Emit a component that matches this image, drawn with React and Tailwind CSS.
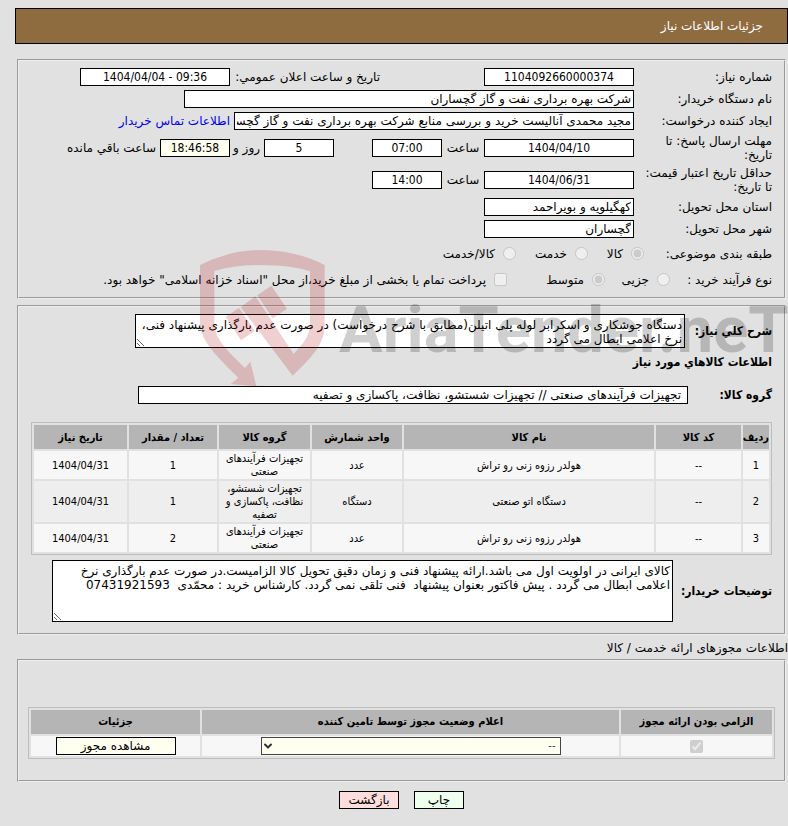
import React from 'react';
import { ChevronDown } from 'lucide-react';

const items = [
  { row: 1, code: '--', name: 'هولدر رزوه زنی رو تراش', unit: 'عدد', group: 'تجهیزات فرآیندهای صنعتی', count: 1, date: '1404/04/31' },
  { row: 2, code: '--', name: 'دستگاه اتو صنعتی', unit: 'دستگاه', group: 'تجهیزات شستشو، نظافت، پاکسازی و تصفیه', count: 1, date: '1404/04/31' },
  { row: 3, code: '--', name: 'هولدر رزوه زنی رو تراش', unit: 'عدد', group: 'تجهیزات فرآیندهای صنعتی', count: 2, date: '1404/04/31' },
];

const box = 'h-[18px] shrink-0 border border-black px-[2px] text-[12px] leading-4';
const condensed = "font-['DejaVu_Sans_Condensed','DejaVu_Sans',sans-serif]";
const panel = 'mr-[2px] ml-[2px] border-2 border-[#eeeeee] [border-style:groove]';
const th = 'h-[24px] bg-[#b5b5b5] p-0 text-[11px] font-bold whitespace-nowrap';

function Field({ id, value, className }) {
  return <input id={id} readOnly defaultValue={value} className={`${box} bg-white ${className}`} />;
}

// dates, times and counters
function NumberField({ id, value, className }) {
  return <input id={id} dir="ltr" readOnly defaultValue={value} className={`${box} ${condensed} text-center ${className}`} />;
}

function Row({ label, id, children, className = 'h-[22px]' }) {
  return (
    <div className={`flex items-center ${className}`}>
      <label htmlFor={id} className="w-[138px] shrink-0 pl-1 leading-[14px]">{label}</label>
      {children}
    </div>
  );
}

function Option({ type = 'radio', name, label, checked, className }) {
  return (
    <label className={`flex items-center gap-2 whitespace-nowrap ${className}`}>
      <input type={type} name={name} defaultChecked={checked} disabled className="m-0 size-[13px] shrink-0" />
      <span>{label}</span>
    </label>
  );
}

function Watermark() {
  return (
    <div aria-hidden="true" className="pointer-events-none absolute top-[245px] right-0 h-[145px] w-[593px]">
      <svg viewBox="0 0 1779 435" className="h-full w-full">
        <g fill="#b40f19" fillOpacity="0.2">
          <path d="M15 60Q105 15 200 15Q300 15 389 60V240C389 300 345 342 293 392L137 186L181 154L296 327C325 295 345 275 345 235V78Q285 60 200 60Q120 60 58 78V235C58 282 100 320 150 369L166 350L184 424L107 417L130 398C65 335 15 285 15 235Z" />
          <path d="M187 151L229 122L276 191L233 220Z" />
          <path d="M92 215L132 189L179 258L138 286Z" />
        </g>
        <text x="432" y="320" fontSize="195" fontFamily="Roboto, sans-serif" fontWeight="bold" fill="#000000" fillOpacity="0.19" direction="ltr">
          AriaTender.neT
        </text>
      </svg>
    </div>
  );
}

export default function App() {
  return (
    <div
      dir="rtl"
      className="relative min-h-screen overflow-hidden bg-[#e1e1e1] pt-2 pb-[18px] pl-[15px] font-['DejaVu_Sans',sans-serif] text-[12px] leading-[14px] text-black"
    >
      <header className="flex h-9 items-center border border-black bg-[#8f6c40] px-6 text-white">
        <h1>جزئیات اطلاعات نیاز</h1>
      </header>

      <section className={`${panel} mt-[15px] pt-[5px] pr-3 pb-[5px]`}>
        <Row label="شماره نیاز:" id="number">
          <NumberField id="number" value="1104092660000374" className="w-[150px] bg-white" />
          <label htmlFor="announce" className="mr-[104px] w-[150px] shrink-0 whitespace-nowrap">تاریخ و ساعت اعلان عمومي:</label>
          <NumberField id="announce" value="1404/04/04 - 09:36" className="w-[150px] bg-white" />
        </Row>
        <Row label="نام دستگاه خریدار:" id="buyer">
          <Field id="buyer" value="شرکت بهره برداری نفت و گاز گچساران" className="w-[450px]" />
        </Row>
        <Row label="ایجاد کننده درخواست:" id="creator">
          <Field id="creator" value="مجید محمدی آنالیست خرید و بررسی منابع شرکت بهره برداری نفت و گاز گچساران" className="w-[400px]" />
          <a href="#contact" className="mr-1 whitespace-nowrap text-[#0000ee]">اطلاعات تماس خریدار</a>
        </Row>
        <Row label={<>مهلت ارسال پاسخ: تا<br />تاریخ:</>} id="deadline" className="h-8">
          <NumberField id="deadline" value="1404/04/10" className="w-[150px] bg-white" />
          <label htmlFor="deadline-time" className="w-[42px] text-center">ساعت</label>
          <NumberField id="deadline-time" value="07:00" className="w-[70px] bg-white" />
          <NumberField id="days" value="5" className="mr-[38px] w-[70px] bg-white" />
          <label htmlFor="days" className="w-[34px] pr-1 whitespace-nowrap">روز و</label>
          <NumberField id="remaining" value="18:46:58" className="w-[70px] bg-[#fffff0]" />
          <label htmlFor="remaining" className="mr-1 whitespace-nowrap">ساعت باقي مانده</label>
        </Row>
        <Row label={<>حداقل تاریخ اعتبار قیمت:<br />تا تاریخ:</>} id="validity" className="h-8">
          <NumberField id="validity" value="1404/06/31" className="w-[150px] bg-white" />
          <label htmlFor="validity-time" className="w-[42px] text-center">ساعت</label>
          <NumberField id="validity-time" value="14:00" className="w-[70px] bg-white" />
        </Row>
        <Row label="استان محل تحویل:" id="province">
          <Field id="province" value="کهگیلویه و بویراحمد" className="w-[150px]" />
        </Row>
        <Row label="شهر محل تحویل:" id="city">
          <Field id="city" value="گچساران" className="w-[150px]" />
        </Row>
        <div className="flex h-[27px] items-center">
          <span className="w-[128px] shrink-0">طبقه بندی موضوعی:</span>
          <Option name="subject" label="کالا" checked className="w-[56px]" />
          <Option name="subject" label="خدمت" className="w-[72px]" />
          <Option name="subject" label="کالا/خدمت" />
        </div>
        <div className="flex h-[25px] items-center">
          <span className="w-[102px] shrink-0">نوع فرآیند خرید :</span>
          <Option name="process" label="جزیی" className="w-[65px]" />
          <Option name="process" label="متوسط" checked className="w-[98px]" />
          <Option type="checkbox" name="treasury" label={'پرداخت تمام یا بخشی از مبلغ خرید،از محل "اسناد خزانه اسلامی" خواهد بود.'} />
        </div>
      </section>

      <section className={`${panel} mt-[6px] pt-[7px] pr-3 pb-[11px] pl-3`}>
        <div className="flex items-center">
          <label htmlFor="summary" className={`w-[87px] shrink-0 font-bold whitespace-nowrap ${condensed}`}>شرح کلي نیاز:</label>
          <textarea
            id="summary"
            readOnly
            className="h-[34px] w-[550px] overflow-hidden border border-black bg-white px-[2px] py-[3px] text-[12px] leading-[14px] whitespace-pre"
            defaultValue={'دستگاه جوشکاری و اسکرابر لوله پلی اتیلن(مطابق با شرح درخواست) در صورت عدم بارگذاری پیشنهاد فنی،\nنرخ اعلامی ابطال می گردد'}
          />
        </div>
        <h2 className={`mt-[7px] font-bold ${condensed}`}>اطلاعات کالاهاي مورد نیاز</h2>
        <div className="mt-[17px] flex items-center">
          <label htmlFor="group" className={`w-[84px] shrink-0 font-bold ${condensed}`}>گروه کالا:</label>
          <input id="group" readOnly defaultValue="تجهیزات فرآیندهای صنعتی // تجهیزات شستشو، نظافت، پاکسازی و تصفیه" className="h-[18px] w-[550px] border border-black bg-white px-[6px] text-[12px] leading-4" />
        </div>

        <table className={`mt-[18px] w-full table-fixed border-separate border-spacing-[2px] border border-[#bdbdbd] text-center text-[11px] leading-[13px] ${condensed}`}>
          <colgroup>
            <col className="w-[26px]" />
            <col className="w-[85px]" />
            <col />
            <col className="w-[90px]" />
            <col className="w-[91px]" />
            <col className="w-[88px]" />
            <col className="w-[93px]" />
          </colgroup>
          <thead>
            <tr>
              <th className={th}>ردیف</th>
              <th className={th}>کد کالا</th>
              <th className={th}>نام کالا</th>
              <th className={th}>واحد شمارش</th>
              <th className={th}>گروه کالا</th>
              <th className={th}>تعداد / مقدار</th>
              <th className={th}>تاریخ نیاز</th>
            </tr>
          </thead>
          <tbody>
            {items.map((item) => (
              <tr key={item.row} className="bg-[#f7f7f7] even:bg-[#eeeeee]">
                <td className="p-px">{item.row}</td>
                <td className="p-px">{item.code}</td>
                <td className="p-px">{item.name}</td>
                <td className="p-px">{item.unit}</td>
                <td className="p-px">{item.group}</td>
                <td className="p-px">{item.count}</td>
                <td className="p-px">{item.date}</td>
              </tr>
            ))}
          </tbody>
        </table>

        <div className="mt-[5px] flex items-center">
          <label htmlFor="notes" className={`w-[99px] shrink-0 font-bold whitespace-nowrap ${condensed}`}>توضیحات خریدار:</label>
          <textarea
            id="notes"
            readOnly
            className="h-[62px] w-[621px] overflow-hidden border border-black bg-white px-[2px] py-[3px] text-[12px] leading-[14px] whitespace-pre"
            defaultValue={'کالای ایرانی در اولویت اول می باشد.ارائه پیشنهاد فنی و زمان دقیق تحویل کالا الزامیست.در صورت عدم بارگذاری نرخ\nاعلامی ابطال می گردد . پیش فاکتور بعنوان پیشنهاد  فنی تلقی نمی گردد. کارشناس خرید : محمّدی  07431921593'}
          />
        </div>
      </section>

      <h2 className="mt-[6px]">اطلاعات مجوزهای ارائه خدمت / کالا</h2>

      <section className={`${panel} mt-[4px] pt-[46px] pr-[9px] pb-[21px] pl-[9px]`}>
        <table className={`w-full table-fixed border-separate border-spacing-[2px] border border-[#bdbdbd] text-center ${condensed}`}>
          <colgroup>
            <col className="w-[151px]" />
            <col />
            <col className="w-[169px]" />
          </colgroup>
          <thead>
            <tr>
              <th className={th}>الزامی بودن ارائه مجوز</th>
              <th className={th}>اعلام وضعیت مجوز توسط تامین کننده</th>
              <th className={th}>جزئیات</th>
            </tr>
          </thead>
          <tbody>
            <tr className="bg-[#f7f7f7]">
              <td className="p-px">
                <input type="checkbox" aria-label="الزامی بودن ارائه مجوز" defaultChecked disabled className="mx-auto block size-[13px]" />
              </td>
              <td className="p-px">
                <div className="relative mx-auto w-[300px]">
                  <select aria-label="اعلام وضعیت مجوز" className="block h-[18px] w-full appearance-none border border-[#444444] bg-[#fffff0] px-1 text-[11px] leading-4 text-[#333333]">
                    <option>--</option>
                  </select>
                  <ChevronDown className="pointer-events-none absolute top-[3px] left-[1px] size-3 text-[#333333]" strokeWidth={4} />
                </div>
              </td>
              <td className="p-px">
                <button className="mx-auto block h-[18px] w-[120px] border border-black bg-[#fffff0] font-['DejaVu_Sans',sans-serif] text-[12px] leading-4">مشاهده مجوز</button>
              </td>
            </tr>
          </tbody>
        </table>
      </section>

      <footer className="mt-[9px] flex justify-center gap-[15px]">
        <button className="h-[18px] w-[50px] border border-black bg-[#eeffee] leading-4">چاپ</button>
        <button className="h-[18px] w-[60px] border border-black bg-[#ffdddd] leading-4">بازگشت</button>
      </footer>

      <Watermark />
    </div>
  );
}
